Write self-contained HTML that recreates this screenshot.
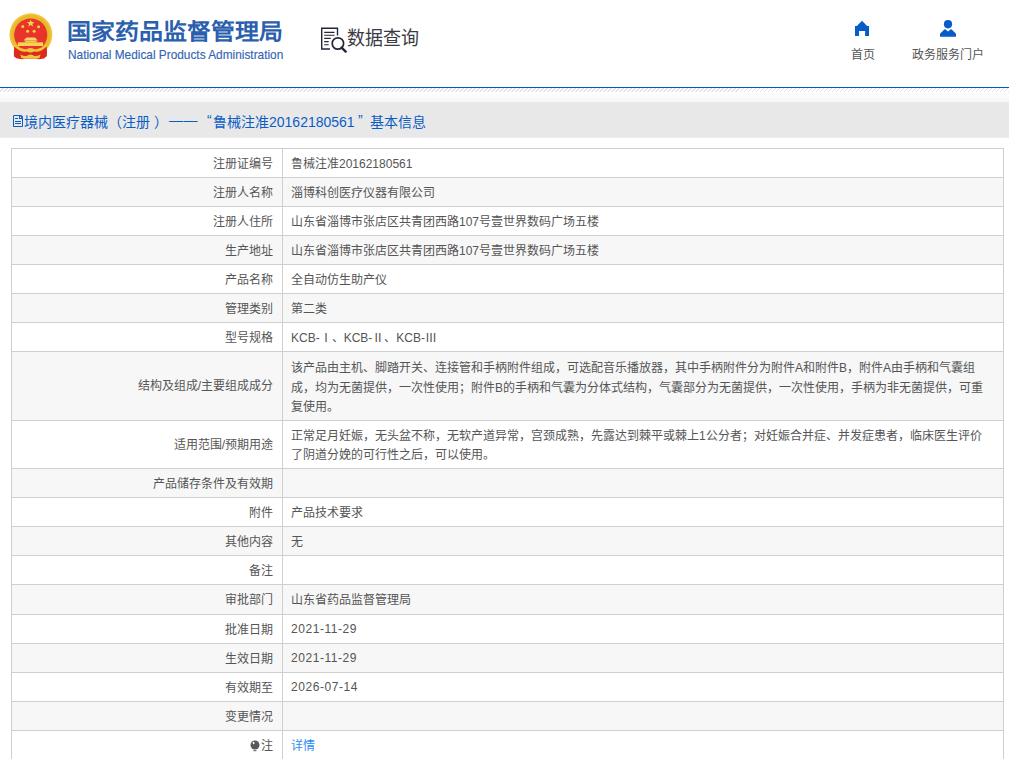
<!DOCTYPE html>
<html lang="zh-CN">
<head>
<meta charset="utf-8">
<style>
*{margin:0;padding:0;box-sizing:border-box;}
html,body{width:1009px;height:759px;overflow:hidden;background:#fff;}
body{font-family:"Liberation Sans",sans-serif;font-size:12px;color:#555;position:relative;}
.abs{position:absolute;}
#hdr{position:absolute;left:0;top:0;width:1009px;height:87px;background:#fff;}
#blue{position:absolute;left:0;top:87px;width:1009px;height:1px;background:#005bbf;}
#hatch{position:absolute;left:0;top:88px;width:1009px;height:4px;
 background:repeating-linear-gradient(135deg,#fff 0,#fff 1.83px,#e2e2e2 1.83px,#e2e2e2 2.83px);}
#grad{position:absolute;left:0;top:92px;width:1009px;height:10px;background:linear-gradient(#fff,#f6f6f6);}
#bar{position:absolute;left:0;top:102px;width:1009px;height:35px;background:#e8e8e8;}
#barline{position:absolute;left:0;top:137px;width:1009px;height:1px;background:#ececf2;}
#title{font-weight:350;position:absolute;left:0;top:112px;width:1009px;height:20px;font-size:14px;line-height:20px;color:#0b5cc6;white-space:nowrap;}
.logo-cn{position:absolute;left:67px;top:15px;transform:scaleY(0.9);transform-origin:0 27px;font-size:24px;line-height:32px;font-weight:900;color:#2b5fae;white-space:nowrap;}
.logo-en{position:absolute;left:68px;top:47px;font-size:11.85px;line-height:16px;color:#3565b2;-webkit-text-stroke:0.15px #3565b2;white-space:nowrap;}
.sjcx{position:absolute;left:347px;top:26px;font-size:18px;line-height:26px;color:#3a3a44;font-weight:300;transform:scaleY(1.06);white-space:nowrap;}
.nav{position:absolute;top:47px;font-size:12px;line-height:16px;color:#555;font-weight:350;white-space:nowrap;}
#tbl{font-weight:350;position:absolute;left:11px;top:148px;width:993px;border-left:1px solid #d0cfd0;border-right:1px solid #d0cfd0;}
.r{position:relative;border-top:1px solid #d0cfd0;white-space:nowrap;}
.r.g{background:#f7f7f7;}
.r .k{position:absolute;left:0;top:0;bottom:0;width:271px;border-right:1px solid #d0cfd0;}
.r .k span{position:absolute;right:9px;top:7px;line-height:16px;}
.r .v{position:absolute;left:279px;top:7px;line-height:16px;}
.d{letter-spacing:.55px;position:relative;top:-1px;}
.dot{display:inline-block;vertical-align:-3px;}
#title span{position:absolute;top:0;}
a{color:#2b8cf5;text-decoration:none;}
</style>
</head>
<body>
<div id="hdr">
  <svg class="abs" style="left:0;top:0" width="60" height="64" viewBox="0 0 60 64">
    <circle cx="30.9" cy="34.7" r="21.4" fill="#f2c53a"/>
    <circle cx="30.9" cy="34.7" r="19.6" fill="#e9b92c"/>
    <circle cx="30.7" cy="35" r="16.6" fill="#e8342a"/>
    <path d="M14.3 46.5 Q13.6 52 14 56.5 L17 58.6 L22 59.2 Q30.5 57.8 39 59.2 L44 58.6 L46.9 56 Q47.3 51 46.6 46.5 Q38 51.5 30.5 51 Q23 51.5 14.3 46.5Z" fill="#dd2a1f"/>
    <path d="M30.7 19.5 l1.05 2.6 2.8 0.1 -2.2 1.75 0.8 2.7 -2.45 -1.55 -2.45 1.55 0.8 -2.7 -2.2 -1.75 2.8 -0.1z" fill="#f5d24a"/>
    <circle cx="22.8" cy="26.4" r="1.5" fill="#f5d24a"/>
    <circle cx="38.6" cy="26.8" r="1.5" fill="#f5d24a"/>
    <circle cx="27.6" cy="31.2" r="1.5" fill="#f5d24a"/>
    <circle cx="34.1" cy="31.2" r="1.5" fill="#f5d24a"/>
    <path d="M26.5 37.4 H35 L37.8 40.6 H23.5Z" fill="#f6d766"/>
    <rect x="25" y="40.6" width="11.5" height="1.8" fill="#f2c85a"/>
    <path d="M17.8 42.3 H43.1 V46 H17.8Z" fill="#f7d450"/>
    <path d="M15 44.5 Q22 50 27 49 Q30.5 47 34 49 Q39 50 46 44.5 L46.6 46.5 Q40 53 34 51.5 Q30.5 53.5 27 51.5 Q21 53 14.3 46.5Z" fill="#f2c53a"/>
    <path d="M20.3 54.5 Q25 57 27.5 55.5 Q30.5 53.5 33.5 55.5 Q36 57 40.5 54.5 L39.5 58 Q35 59.5 30.5 58 Q26 59.5 21.3 58Z" fill="#f2c53a"/>
  </svg>
  <div class="logo-cn">国家药品监督管理局</div>
  <div class="logo-en">National Medical Products Administration</div>
  <svg class="abs" style="left:318px;top:24px" width="32" height="32" viewBox="0 0 32 32">
    <g fill="none" stroke="#25253a" stroke-width="1.4">
      <path d="M12 25 H3.7 V4.3 H19.5 V11.5"/>
    </g>
    <g stroke="#25253a" stroke-width="1.1">
      <path d="M6.2 8.4 H16.5 M6.2 11.3 H16.5 M6.2 14.4 H12.8 M6.2 17.6 H10.7 M6.2 20.8 H10.7"/>
    </g>
    <circle cx="19.9" cy="19.5" r="5.7" fill="none" stroke="#25253a" stroke-width="1.7"/>
    <path d="M23.6 23.6 L27.7 27.6" stroke="#25253a" stroke-width="2.4" stroke-linecap="round"/>
  </svg>
  <div class="sjcx">数据查询</div>
  <svg class="abs" style="left:854px;top:20px" width="16" height="17" viewBox="0 0 16 17">
    <path d="M1 6.1 H2.9 L8 0.8 L13.1 6.1 H15 V16 H11.1 V11 H5 V16 H1Z" fill="#075cc8"/>
  </svg>
  <div class="nav" style="left:851px">首页</div>
  <svg class="abs" style="left:939px;top:19px" width="18" height="18" viewBox="0 0 18 18">
    <circle cx="9" cy="5.2" r="4.1" fill="#075cc8"/>
    <path d="M1 17.7 V14.8 L5.3 10.5 Q6 9.9 6.7 10.5 L9 12.6 L11.3 10.5 Q12 9.9 12.7 10.5 L17 14.8 V17.7Z" fill="#075cc8"/><path d="M8.2 8.8 L9 10 L9.8 8.8Z" fill="#075cc8"/>
  </svg>
  <div class="nav" style="left:912px">政务服务门户</div>
</div>
<div id="blue"></div>
<div id="hatch"></div>
<div id="grad"></div>
<div id="bar"></div>
<div id="barline"></div>
<svg class="abs" style="left:12px;top:114px" width="12" height="14" viewBox="0 0 12 14">
  <path d="M1.5 1.5 H9 L10.5 3 V12.5 H1.5Z" fill="none" stroke="#0b5cc6" stroke-width="1"/>
  <path d="M7 1 H9.2 L11 2.8 V5 H7Z" fill="#0b5cc6"/>
  <circle cx="8.6" cy="3.2" r="0.7" fill="#fff"/>
  <path d="M3 4.5 H6 M3 7.5 H9 M3 9.5 H9" stroke="#0b5cc6" stroke-width="1"/>
</svg>
<div id="title"><span style="left:24px">境内医疗器械（注册</span><span style="left:154px">）</span><span style="left:169px;top:-2px;letter-spacing:0.5px">——</span><span style="left:207px;top:-2px">“</span><span style="left:213px">鲁械注准20162180561</span><span style="left:358px;top:-2px">”</span><span style="left:370px">基本信息</span></div>

<div id="tbl">
<div class="r" style="height:29px"><div class="k"><span>注册证编号</span></div><div class="v">鲁械注准20162180561</div></div>
<div class="r g" style="height:29px"><div class="k"><span>注册人名称</span></div><div class="v">淄博科创医疗仪器有限公司</div></div>
<div class="r" style="height:29px"><div class="k"><span>注册人住所</span></div><div class="v">山东省淄博市张店区共青团西路107号壹世界数码广场五楼</div></div>
<div class="r g" style="height:29px"><div class="k"><span>生产地址</span></div><div class="v">山东省淄博市张店区共青团西路107号壹世界数码广场五楼</div></div>
<div class="r" style="height:29px"><div class="k"><span>产品名称</span></div><div class="v">全自动仿生助产仪</div></div>
<div class="r g" style="height:29px"><div class="k"><span>管理类别</span></div><div class="v">第二类</div></div>
<div class="r" style="height:29px"><div class="k"><span>型号规格</span></div><div class="v">KCB-Ⅰ、KCB-Ⅱ、KCB-Ⅲ</div></div>
<div class="r g" style="height:69px"><div class="k"><span style="top:26px">结构及组成/主要组成成分</span></div><div class="v" style="top:7px;line-height:19.6px">该产品由主机、脚踏开关、连接管和手柄附件组成，可选配音乐播放器，其中手柄附件分为附件A和附件B，附件A由手柄和气囊组<br>成，均为无菌提供，一次性使用；附件B的手柄和气囊为分体式结构，气囊部分为无菌提供，一次性使用，手柄为非无菌提供，可重<br>复使用。</div></div>
<div class="r" style="height:48px"><div class="k"><span style="top:16px">适用范围/预期用途</span></div><div class="v" style="top:6px;line-height:19px">正常足月妊娠，无头盆不称，无软产道异常，宫颈成熟，先露达到棘平或棘上1公分者；对妊娠合并症、并发症患者，临床医生评价<br>了阴道分娩的可行性之后，可以使用。</div></div>
<div class="r g" style="height:29px"><div class="k"><span>产品储存条件及有效期</span></div><div class="v"></div></div>
<div class="r" style="height:29px"><div class="k"><span>附件</span></div><div class="v">产品技术要求</div></div>
<div class="r g" style="height:29px"><div class="k"><span>其他内容</span></div><div class="v">无</div></div>
<div class="r" style="height:29px"><div class="k"><span>备注</span></div><div class="v"></div></div>
<div class="r g" style="height:30px"><div class="k"><span>审批部门</span></div><div class="v">山东省药品监督管理局</div></div>
<div class="r" style="height:29px"><div class="k"><span>批准日期</span></div><div class="v"><span class='d'>2021-11-29</span></div></div>
<div class="r g" style="height:29px"><div class="k"><span>生效日期</span></div><div class="v"><span class='d'>2021-11-29</span></div></div>
<div class="r" style="height:29px"><div class="k"><span>有效期至</span></div><div class="v"><span class='d'>2026-07-14</span></div></div>
<div class="r g" style="height:29px"><div class="k"><span>变更情况</span></div><div class="v"></div></div>
<div class="r" style="height:60px"><div class="k"><span><svg class='dot' width='11' height='13' viewBox='0 0 11 13'><circle cx='5' cy='5' r='4.5' fill='#58585e'/><ellipse cx='3.6' cy='3' rx='0.9' ry='1.2' fill='#fff'/><rect x='3.4' y='10.2' width='3' height='1' fill='#58585e'/></svg>注</span></div><div class="v"><a>详情</a></div></div>
</div>
</body>
</html>
